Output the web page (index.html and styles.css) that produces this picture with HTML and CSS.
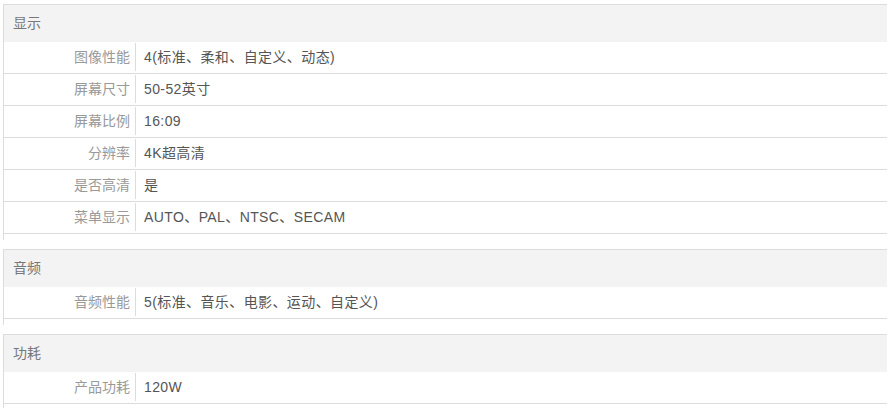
FILE: index.html
```html
<!DOCTYPE html>
<html lang="zh-CN">
<head>
<meta charset="utf-8">
<title>参数</title>
<link rel="stylesheet" href="styles.css">
</head>
<body>
<div class="specs">
  <section class="group">
    <div class="group-title">显示</div>
    <div class="row"><div class="label">图像性能</div><div class="value">4(标准、柔和、自定义、动态)</div></div>
    <div class="row"><div class="label">屏幕尺寸</div><div class="value">50-52英寸</div></div>
    <div class="row"><div class="label">屏幕比例</div><div class="value">16:09</div></div>
    <div class="row"><div class="label">分辨率</div><div class="value">4K超高清</div></div>
    <div class="row"><div class="label">是否高清</div><div class="value">是</div></div>
    <div class="row"><div class="label">菜单显示</div><div class="value">AUTO、PAL、NTSC、SECAM</div></div>
  </section>
  <section class="group">
    <div class="group-title">音频</div>
    <div class="row"><div class="label">音频性能</div><div class="value">5(标准、音乐、电影、运动、自定义)</div></div>
  </section>
  <section class="group">
    <div class="group-title">功耗</div>
    <div class="row"><div class="label">产品功耗</div><div class="value">120W</div></div>
  </section>
</div>
</body>
</html>
```

FILE: styles.css
```css
html, body {
  margin: 0;
  padding: 0;
  background: #fff;
}
body {
  font-family: "Liberation Sans", "Noto Sans CJK SC", sans-serif;
  font-size: 14px;
}
.specs {
  margin: 4px 3px 0 3px;
  display: flex;
  flex-direction: column;
  gap: 9px;
}
.group {
  border-top: 1px solid #dcdcdc;
  border-left: 1px solid #dcdcdc;
  padding-bottom: 6px;
}
.group-title {
  height: 37px;
  line-height: 37px;
  background: #f3f3f3;
  color: #777;
  padding-left: 9px;
}
.row {
  display: flex;
  height: 30px;
  border-bottom: 1px solid #dcdcdc;
  padding-top: 1px;
}
.label {
  width: 126px;
  padding-right: 5px;
  text-align: right;
  color: #999;
  border-right: 1px solid #dcdcdc;
  height: 28px;
  line-height: 28px;
}
.value {
  padding-left: 8px;
  color: #555;
  line-height: 28px;
  letter-spacing: 0.4px;
}
```
